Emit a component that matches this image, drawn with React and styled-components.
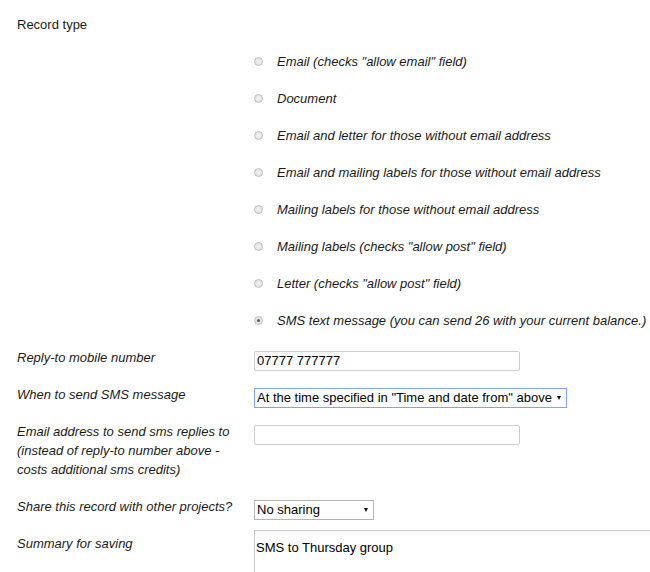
import React, { useState } from 'react';
import styled, { createGlobalStyle } from 'styled-components';

const GlobalStyle = createGlobalStyle`
  html, body {
    margin: 0;
    padding: 0;
    background: #fff;
    overflow: hidden;
  }
  body {
    font-family: "Liberation Sans", Arial, sans-serif;
    font-size: 13px;
    color: #1a1a1a;
  }
`;

const recordTypes = [
  'Email (checks "allow email" field)',
  'Document',
  'Email and letter for those without email address',
  'Email and mailing labels for those without email address',
  'Mailing labels for those without email address',
  'Mailing labels (checks "allow post" field)',
  'Letter (checks "allow post" field)',
  'SMS text message (you can send 26 with your current balance.)'
];

function App() {
  const [type, setType] = useState(7);
  const [mobile, setMobile] = useState('07777 777777');
  const [replyEmail, setReplyEmail] = useState('');
  const [summary, setSummary] = useState('SMS to Thursday group');

  return (
    <Form>
      <GlobalStyle />
      <Row>
        <Label $plain>Record type</Label>
      </Row>
      <OptionsRow>
        <span />
        <Options>
          {recordTypes.map((text, i) => (
            <Option key={text} onClick={() => setType(i)}>
              <Radio $checked={type === i} />
              <OptionText>{text}</OptionText>
            </Option>
          ))}
        </Options>
      </OptionsRow>
      <Row>
        <Label>Reply-to mobile number</Label>
        <TextInput
          type="text"
          value={mobile}
          onChange={e => setMobile(e.target.value)}
        />
      </Row>
      <Row>
        <Label>When to send SMS message</Label>
        <SelectWrap>
          <Select $width={313} $focused defaultValue="time">
            <option value="time">At the time specified in "Time and date from" above</option>
            <option value="now">Immediately</option>
          </Select>
          <Arrow />
        </SelectWrap>
      </Row>
      <Row>
        <Label>
          Email address to send sms replies to (instead of reply-to number above -
          costs additional sms credits)
        </Label>
        <TextInput
          type="text"
          value={replyEmail}
          onChange={e => setReplyEmail(e.target.value)}
        />
      </Row>
      <Row>
        <Label>Share this record with other projects?</Label>
        <SelectWrap>
          <Select $width={120} defaultValue="none">
            <option value="none">No sharing</option>
            <option value="all">All projects</option>
          </Select>
          <Arrow />
        </SelectWrap>
      </Row>
      <Row>
        <Label>Summary for saving</Label>
        <TextArea value={summary} onChange={e => setSummary(e.target.value)} />
      </Row>
    </Form>
  );
}

const Form = styled.div`
  padding: 6px 0 0 17px;
  width: 633px;
  overflow: hidden;
`;

const Row = styled.div`
  display: grid;
  grid-template-columns: 237px 1fr;
  align-items: start;
  padding: 9px 0;
`;

const OptionsRow = styled(Row)`
  padding: 0;
`;

const Label = styled.div`
  line-height: 19px;
  font-style: ${p => (p.$plain ? 'normal' : 'italic')};
  padding-right: 14px;
`;

const Options = styled.div`
  display: flex;
  flex-direction: column;
`;

const Option = styled.label`
  display: flex;
  align-items: center;
  height: 37px;
  cursor: pointer;
`;

const Radio = styled.span`
  width: 9px;
  height: 9px;
  margin: 0 14px 0 0;
  border-radius: 50%;
  box-sizing: border-box;
  border: 1px solid #bdbdbd;
  background: radial-gradient(circle, #f2f2f2 0%, #dcdcdc 100%);
  position: relative;
  flex-shrink: 0;

  &::after {
    content: '';
    display: ${p => (p.$checked ? 'block' : 'none')};
    position: absolute;
    left: 2px;
    top: 2px;
    width: 3px;
    height: 3px;
    border-radius: 50%;
    background: #555;
  }
`;

const OptionText = styled.span`
  font-style: italic;
  white-space: nowrap;
`;

const TextInput = styled.input`
  box-sizing: border-box;
  width: 266px;
  height: 20px;
  margin: 2.5px 0 -3.5px;
  padding: 0 2px;
  border: 1px solid #cfcfcf;
  border-radius: 2px;
  font: 13px "Liberation Sans", Arial, sans-serif;
  color: #000;
  outline: none;
`;

const SelectWrap = styled.div`
  position: relative;
  margin: 2.5px 0 -3.5px;
  width: fit-content;
`;

const Select = styled.select`
  appearance: none;
  -webkit-appearance: none;
  box-sizing: border-box;
  width: ${p => p.$width}px;
  height: 20px;
  padding: 0 14px 0 2px;
  border: 1px solid ${p => (p.$focused ? '#7aa7f0' : '#b4b4b4')};
  border-radius: 0;
  background: #fff;
  font: 13px "Liberation Sans", Arial, sans-serif;
  color: #000;
  outline: none;
`;

const Arrow = styled.span`
  position: absolute;
  right: 6px;
  top: 8px;
  width: 0;
  height: 0;
  border-left: 2.5px solid transparent;
  border-right: 2.5px solid transparent;
  border-top: 4px solid #111;
  pointer-events: none;
`;

const TextArea = styled.textarea`
  box-sizing: border-box;
  width: 430px;
  height: 60px;
  margin-top: -4.5px;
  padding: 9px 1px;
  border: 1px solid #c8c8c8;
  border-radius: 0;
  font: 13px "Liberation Sans", Arial, sans-serif;
  color: #000;
  resize: none;
  outline: none;
`;

export default App;
